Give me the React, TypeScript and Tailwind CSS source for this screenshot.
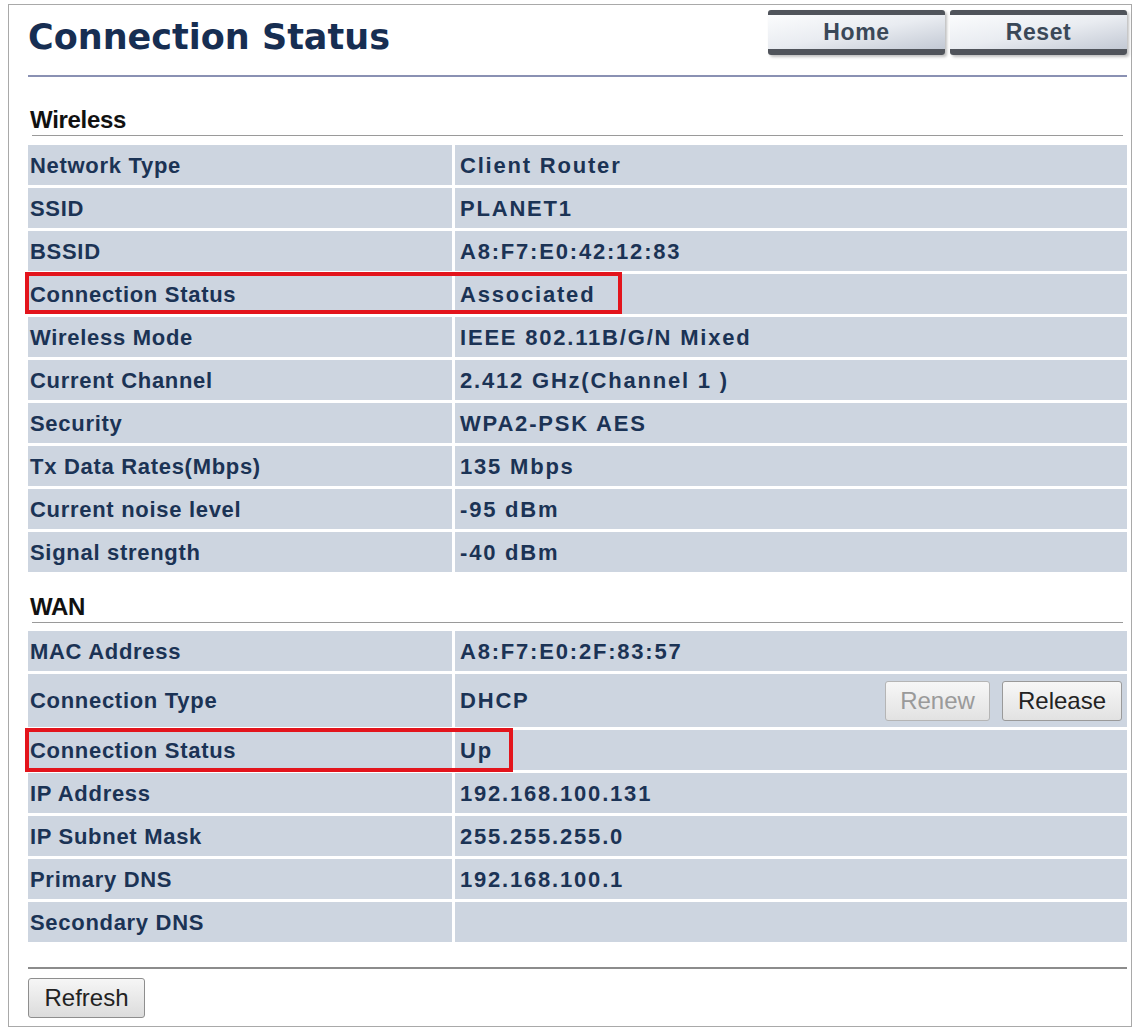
const wireless: [string, string][] = [
  ["Network Type", "Client Router"],
  ["SSID", "PLANET1"],
  ["BSSID", "A8:F7:E0:42:12:83"],
  ["Connection Status", "Associated"],
  ["Wireless Mode", "IEEE 802.11B/G/N Mixed"],
  ["Current Channel", "2.412 GHz(Channel 1 )"],
  ["Security", "WPA2-PSK AES"],
  ["Tx Data Rates(Mbps)", "135 Mbps"],
  ["Current noise level", "-95 dBm"],
  ["Signal strength", "-40 dBm"],
];

const wan: [string, string][] = [
  ["MAC Address", "A8:F7:E0:2F:83:57"],
  ["Connection Type", "DHCP"],
  ["Connection Status", "Up"],
  ["IP Address", "192.168.100.131"],
  ["IP Subnet Mask", "255.255.255.0"],
  ["Primary DNS", "192.168.100.1"],
  ["Secondary DNS", ""],
];

function Row({ label, value, tall, children, highlight }: { label: string; value: string; tall?: boolean; children?: React.ReactNode; highlight?: string }) {
  return (
    <div className={`relative grid grid-cols-[424px_1fr] gap-[3px] ${tall ? "h-[53px]" : "h-[40px]"}`}>
      <div className="bg-[#cdd5e0] flex items-center pl-[2px] text-[22px] font-bold tracking-[0.7px] text-[#1b3355]">{label}</div>
      <div className="bg-[#cdd5e0] flex items-center justify-between pl-[5px] pr-[5px] text-[22px] font-bold tracking-[1.8px] text-[#1b3355]">
        <span>{value}</span>
        {children}
      </div>
      {highlight && <div className={`absolute left-[-3px] top-[-2px] border-[4px] border-[#e3141c] ${highlight}`} />}
    </div>
  );
}

function SectionHead({ title, className }: { title: string; className: string }) {
  return (
    <div className={`mx-[4px] border-b border-[#9a9a9a] pb-[3px] ${className}`}>
      <div className="-ml-[2px] text-[24px] leading-[24px] font-bold text-[#111] tracking-[-0.3px]">{title}</div>
    </div>
  );
}

function NavButton({ label }: { label: string }) {
  return (
    <div className="w-[177px] h-[45px] rounded-[3px] border-t-[5px] border-b-[6px] border-[#50545b] bg-gradient-to-br from-[#fbfcfd] via-[#e9ecf1] to-[#c3c9d4] shadow-[2px_2px_3px_rgba(0,0,0,0.25)] flex items-center justify-center text-[23px] font-bold tracking-[0.6px] text-[#3a4858]">
      {label}
    </div>
  );
}

export default function App() {
  return (
    <div className="w-[1137px] h-[1029px] bg-white pt-[4px] pl-[8px]" style={{ fontFamily: '"Liberation Sans", Arial, sans-serif' }}>
      <div className="w-[1124px] h-[1023px] border border-[#a9a9a9] pl-[19px] pr-[4px]">
        {/* header */}
        <div className="h-[70px] flex justify-between items-start">
          <h1 className="mt-[15px] text-[35px] leading-[35px] font-bold text-[#172e52]" style={{ fontFamily: '"DejaVu Sans", Verdana, sans-serif' }}>
            Connection Status
          </h1>
          <div className="mt-[5px] flex gap-[5px]">
            <NavButton label="Home" />
            <NavButton label="Reset" />
          </div>
        </div>
        <div className="h-[2px] bg-[#8a91b3]" />

        {/* Wireless */}
        <SectionHead title="Wireless" className="mt-[31px]" />
        <div className="mt-[9px] flex flex-col gap-[3px]">
          {wireless.map(([l, v]) => (
            <Row key={l} label={l} value={v} highlight={l === "Connection Status" ? "w-[597px] h-[42px]" : undefined} />
          ))}
        </div>

        {/* WAN */}
        <SectionHead title="WAN" className="mt-[23px]" />
        <div className="mt-[8px] flex flex-col gap-[3px]">
          {wan.map(([l, v]) => (
            <Row key={l} label={l} value={v} tall={l === "Connection Type"} highlight={l === "Connection Status" ? "w-[488px] h-[44px]" : undefined}>
              {l === "Connection Type" && (
                <div className="flex gap-[12px] tracking-normal font-normal">
                  <button className="h-[40px] w-[105px] border border-[#b5b5b5] rounded-[3px] bg-gradient-to-b from-[#f7f7f7] to-[#e2e2e2] text-[24px] text-[#9a9a9a]">Renew</button>
                  <button className="h-[40px] w-[120px] border border-[#9a9a9a] rounded-[3px] bg-gradient-to-b from-[#f7f7f7] to-[#e2e2e2] text-[24px] text-[#222]">Release</button>
                </div>
              )}
            </Row>
          ))}
        </div>

        <div className="mt-[25px] h-[2px] bg-[#8c8c8c]" />
        <button className="mt-[9px] h-[40px] w-[117px] border border-[#8e8e8e] rounded-[3px] bg-gradient-to-b from-[#f6f6f6] to-[#dcdcdc] text-[24px] text-[#222]">
          Refresh
        </button>
      </div>
    </div>
  );
}
